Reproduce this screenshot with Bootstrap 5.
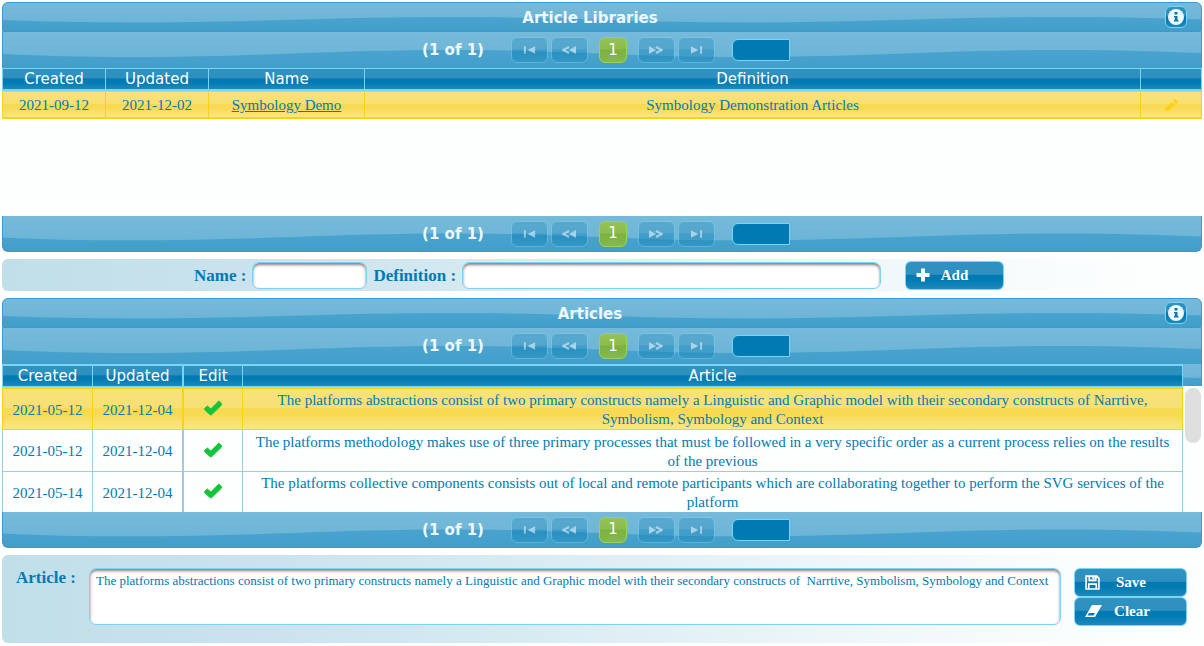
<!DOCTYPE html>
<html lang="en">
<head>
<meta charset="utf-8">
<meta name="viewport" content="width=device-width, initial-scale=1">
<title>Article Libraries</title>
<link href="https://cdn.jsdelivr.net/npm/bootstrap@5.3.0/dist/css/bootstrap.min.css" rel="stylesheet">
<style>
  :root {
    --ink: #017ab3;
    --sky: #79d4f8;
    --glass: linear-gradient(#2f92c0 0%, #2f90bf 46%, #1a80b3 47%, #007ab3 50%, #007ab3 66%, #2089b9 100%);
    --gold: linear-gradient(#f9e37a 0%, #f6df73 48%, #f8da4f 49%, #f8da55 64%, #fae686 100%);
  }
  body { font-family: "Liberation Serif", serif; font-size: 15px; line-height: 19px; color: var(--ink); background: #fdfffe; }
  .page-stack { gap: 7px; padding: 2px; }

  /* Glossy bars with a repeating wave */
  .wave {
    background: url("data:image/svg+xml,%3Csvg xmlns='http://www.w3.org/2000/svg' viewBox='0 0 610 36' preserveAspectRatio='none'%3E%3Cdefs%3E%3ClinearGradient id='a' x2='0' y2='1'%3E%3Cstop stop-color='%2376bada'/%3E%3Cstop offset='1' stop-color='%2368b2d6'/%3E%3C/linearGradient%3E%3ClinearGradient id='b' x2='0' y2='1'%3E%3Cstop stop-color='%2349a3ce'/%3E%3Cstop offset='1' stop-color='%23429fc9'/%3E%3C/linearGradient%3E%3C/defs%3E%3Cpath fill='url(%23a)' d='M0 0h610v36H0z'/%3E%3Cpath fill='url(%23b)' d='M0 22C40 24 80 25 130 25C250 25 330 18 450 18C510 18 560 20 610 22V36H0Z'/%3E%3C/svg%3E") 0 0 / 610px 100% repeat-x;
    font-family: "DejaVu Sans", sans-serif; color: #eef8fc;
    border: 0 solid #3f97cf; border-left-width: 1px; border-right-width: 1px;
  }
  .panel-title { height: 30px; border-top-width: 1px; border-bottom-width: 1px; border-radius: 6px 6px 0 0; padding: 0 14px 0 12px; }
  .panel-title h2 { font-size: 15px; line-height: 28px; font-weight: 700; color: inherit; padding-top: 1px; }
  .info { width: 22px; height: 22px; padding: 0; border: 1px solid var(--sky); border-radius: 6px; background: var(--glass); }

  /* Paginator */
  .pager { height: 36px; padding-left: 8px; gap: 3px; }
  .pager-end { border-bottom-width: 1px; border-radius: 0 0 6px 6px; }
  .pager-text { font-weight: 700; font-size: 15px; margin-right: 24px; padding-top: 1px; }
  .pager button { height: 26px; width: 37px; border: 1px solid var(--sky); border-radius: 6px; padding: 0; display: flex; align-items: center; justify-content: center; background: var(--glass); color: #fff; }
  .pager button:disabled { opacity: .4; }
  .pager button.page-now { width: 28px; margin: 0 8px; background: linear-gradient(#94c355 0, #8abd4b 46%, #7db242 50%, #84b94b 100%); border-color: #9fcf58; font-size: 15px; }
  .pager select { appearance: none; width: 58px; height: 22px; border: 1px solid var(--sky); border-radius: 6px 0 0 6px; background: var(--ink); margin-left: 14px; }

  /* Data tables */
  .grid { width: 100%; table-layout: fixed; border-collapse: separate; border-spacing: 0; text-align: center; }
  .grid th { background: var(--glass); color: #fff; font: 400 15px/19px "DejaVu Sans", sans-serif; border: 0 solid var(--sky); border-width: 1px 1px 2px 0; padding: 1px 0 0; }
  .grid td { border: 0 solid #9fcbe2; border-width: 0 1px 1px 0; padding: 2px 9px 0; background: #fdfffe; }
  .grid th:first-child, .grid td:first-child { border-left-width: 1px; }
  .grid tr.chosen td { background: var(--gold); border-color: #fcd116; border-top-width: 1px; }
  .grid a { color: var(--ink); }
  .grid svg { display: block; margin: 0 auto; }
  .libraries-body { min-height: 148px; }
  .libraries td { height: 28px; }
  .libraries tr.chosen td { border-bottom-width: 2px; }
  .libraries th:nth-child(1) { width: 104px; }
  .libraries th:nth-child(2) { width: 103px; }
  .libraries th:nth-child(3) { width: 156px; }
  .libraries th:nth-child(5) { width: 61px; }
  .articles th { border-width: 2px 1px 1px 0; }
  .articles th:nth-child(1) { width: 91px; }
  .articles th:nth-child(2) { width: 90px; }
  .articles th:nth-child(3) { width: 60px; }
  .articles td { height: 42px; }
  .articles tr.chosen td { border-top-width: 2px; height: 43px; }
  .articles th:nth-child(3), .articles td:nth-child(3) { border-left-width: 1px; }
  .articles td:nth-child(3) { padding-bottom: 4px; }
  .articles tr:last-child td { border-bottom-width: 0; height: 40px; }
  .gutter { width: 19px; }
  .gutter-top { height: 22px; border-left-width: 0; }
  .thumb { width: 16px; height: 55px; border-radius: 8px; background: #dedede; margin: 2px auto 0; }

  /* Entry forms */
  .form-band { border-radius: 6px; background: linear-gradient(90deg, #c0dfe9 0, #cbe3ee 22%, #d4e9f0 38%, #f0f7fa 72%, #fdfffe 96%); }
  .form-band label { font-size: 17px; font-weight: 700; white-space: nowrap; }
  .library-band { padding-right: 6px; }
  .library-form { width: 810px; max-width: 100%; height: 32px; gap: 6px; }
  .name-field { width: 115px; }
  .field { border: 1px solid var(--sky); border-radius: 7px; background: #fff; color: var(--ink); height: 27px; box-shadow: inset 0 2px 3px #8c7a80; min-width: 0; padding: 2px 7px; }
  textarea.field { height: 57px; font-size: 13px; line-height: 17px; padding: 3px 6px; resize: none; display: block; }
  .act { height: 29px; border: 1px solid var(--sky); border-radius: 6px; background: var(--glass); color: #fff; font-weight: 700; font-size: 15px; padding: 0 10px; display: flex; align-items: center; }
  .act svg { flex: none; }
  .act span { flex: 1; text-align: center; padding-right: 14px; }
  .add { width: 99px; margin-left: 18px; }
  .article-form { height: 88px; padding: 13px 15px 0 14px; }
  .article-form label { width: 73px; }
  .actions { width: 113px; margin-left: 13px; }
</style>
</head>
<body>
<svg width="0" height="0" class="position-absolute" aria-hidden="true">
  <symbol id="g-first" viewBox="0 0 14 10"><path fill="#fff" d="M1 1h2v8H1zM13 1v8L5 5z"/></symbol>
  <symbol id="g-prev" viewBox="0 0 14 10"><path fill="#fff" d="M14 1v8L7 5z"/><path fill="none" stroke="#fff" stroke-width="2" d="M7 2 1 5l6 3"/></symbol>
  <symbol id="g-next" viewBox="0 0 14 10"><path fill="#fff" d="M0 1v8l7-4z"/><path fill="none" stroke="#fff" stroke-width="2" d="m7 2 6 3-6 3"/></symbol>
  <symbol id="g-last" viewBox="0 0 14 10"><path fill="#fff" d="M11 1h2v8h-2zM1 1v8l8-4z"/></symbol>
  <symbol id="g-info" viewBox="0 0 16 16"><circle cx="8" cy="8" r="8" fill="#eef7fc"/><path fill="#0b77ad" d="M6.500 3h3v2.500h-3zM6 7h3.500v4h1v1.500H6V11h.8V8.300H6z"/></symbol>
  <symbol id="g-check" viewBox="0 0 18 16"><path fill="#13c33a" stroke="#13c33a" stroke-width="1" stroke-linejoin="round" d="M.6 8.500 3.300 6l3.500 3L14.800 1l2.700 2.600v1.500L7.500 14.800H6.200L.6 9.500z"/></symbol>
</svg>

<main class="page-stack d-flex flex-column">
  <section>
    <header class="wave panel-title d-flex align-items-center">
      <h2 class="flex-grow-1 text-center m-0">Article Libraries</h2>
      <button class="info d-flex align-items-center justify-content-center" type="button" aria-label="About article libraries"><svg width="16" height="16"><use href="#g-info"/></svg></button>
    </header>
    <nav class="wave pager d-flex align-items-center justify-content-center" aria-label="Library pages, top">
      <span class="pager-text">(1 of 1)</span>
      <button type="button" disabled aria-label="First page"><svg width="13" height="10"><use href="#g-first"/></svg></button>
      <button type="button" disabled aria-label="Previous page"><svg width="14" height="10"><use href="#g-prev"/></svg></button>
      <button type="button" class="page-now">1</button>
      <button type="button" disabled aria-label="Next page"><svg width="14" height="10"><use href="#g-next"/></svg></button>
      <button type="button" disabled aria-label="Last page"><svg width="13" height="10"><use href="#g-last"/></svg></button>
      <select aria-label="Rows per page"></select>
    </nav>
    <div class="libraries-body">
      <table class="grid libraries">
        <thead><tr><th>Created</th><th>Updated</th><th>Name</th><th>Definition</th><th></th></tr></thead>
        <tbody><tr class="chosen"><td>2021-09-12</td><td>2021-12-02</td><td><a href="#">Symbology Demo</a></td><td>Symbology Demonstration Articles</td>
          <td><svg width="13" height="13" viewBox="0 0 13 13"><path fill="#fcd116" d="M0 12 .5 8.500 7 3l3 3-6 5.500zM8 2l2-2 3 3-2 2z"/></svg></td></tr></tbody>
      </table>
    </div>
    <nav class="wave pager pager-end d-flex align-items-center justify-content-center" aria-label="Library pages, bottom">
      <span class="pager-text">(1 of 1)</span>
      <button type="button" disabled aria-label="First page"><svg width="13" height="10"><use href="#g-first"/></svg></button>
      <button type="button" disabled aria-label="Previous page"><svg width="14" height="10"><use href="#g-prev"/></svg></button>
      <button type="button" class="page-now">1</button>
      <button type="button" disabled aria-label="Next page"><svg width="14" height="10"><use href="#g-next"/></svg></button>
      <button type="button" disabled aria-label="Last page"><svg width="13" height="10"><use href="#g-last"/></svg></button>
      <select aria-label="Rows per page"></select>
    </nav>
  </section>

  <form class="form-band library-band">
    <div class="library-form mx-auto d-flex align-items-center">
      <label for="lib-name">Name :</label>
      <input id="lib-name" class="field name-field" type="text">
      <label for="lib-def">Definition :</label>
      <input id="lib-def" class="field flex-grow-1" type="text">
      <button type="button" class="act add"><svg width="14" height="14" viewBox="0 0 14 14"><path fill="#fff" d="M5 .5h4V5h4.500v4H9v4.500H5V9H.5V5H5z"/></svg><span>Add</span></button>
    </div>
  </form>

  <section>
    <header class="wave panel-title d-flex align-items-center">
      <h2 class="flex-grow-1 text-center m-0">Articles</h2>
      <button class="info d-flex align-items-center justify-content-center" type="button" aria-label="About articles"><svg width="16" height="16"><use href="#g-info"/></svg></button>
    </header>
    <nav class="wave pager d-flex align-items-center justify-content-center" aria-label="Article pages, top">
      <span class="pager-text">(1 of 1)</span>
      <button type="button" disabled aria-label="First page"><svg width="13" height="10"><use href="#g-first"/></svg></button>
      <button type="button" disabled aria-label="Previous page"><svg width="14" height="10"><use href="#g-prev"/></svg></button>
      <button type="button" class="page-now">1</button>
      <button type="button" disabled aria-label="Next page"><svg width="14" height="10"><use href="#g-next"/></svg></button>
      <button type="button" disabled aria-label="Last page"><svg width="13" height="10"><use href="#g-last"/></svg></button>
      <select aria-label="Rows per page"></select>
    </nav>
    <div class="d-flex">
      <div class="flex-grow-1">
        <table class="grid articles">
          <thead><tr><th>Created</th><th>Updated</th><th>Edit</th><th>Article</th></tr></thead>
          <tbody>
            <tr class="chosen"><td>2021-05-12</td><td>2021-12-04</td><td><svg width="18" height="16"><use href="#g-check"/></svg></td><td>The platforms abstractions consist of two primary constructs namely a Linguistic and Graphic model with their secondary constructs of Narrtive, Symbolism, Symbology and Context</td></tr>
            <tr><td>2021-05-12</td><td>2021-12-04</td><td><svg width="18" height="16"><use href="#g-check"/></svg></td><td>The platforms methodology makes use of three primary processes that must be followed in a very specific order as a current process relies on the results of the previous</td></tr>
            <tr><td>2021-05-14</td><td>2021-12-04</td><td><svg width="18" height="16"><use href="#g-check"/></svg></td><td>The platforms collective components consists out of local and remote participants which are collaborating together to perform the SVG services of the platform</td></tr>
          </tbody>
        </table>
      </div>
      <div class="gutter flex-shrink-0"><div class="wave gutter-top"></div><div class="thumb"></div></div>
    </div>
    <nav class="wave pager pager-end d-flex align-items-center justify-content-center" aria-label="Article pages, bottom">
      <span class="pager-text">(1 of 1)</span>
      <button type="button" disabled aria-label="First page"><svg width="13" height="10"><use href="#g-first"/></svg></button>
      <button type="button" disabled aria-label="Previous page"><svg width="14" height="10"><use href="#g-prev"/></svg></button>
      <button type="button" class="page-now">1</button>
      <button type="button" disabled aria-label="Next page"><svg width="14" height="10"><use href="#g-next"/></svg></button>
      <button type="button" disabled aria-label="Last page"><svg width="13" height="10"><use href="#g-last"/></svg></button>
      <select aria-label="Rows per page"></select>
    </nav>
  </section>

  <form class="form-band article-form d-flex">
    <label for="article">Article :</label>
    <textarea id="article" class="field flex-grow-1">The platforms abstractions consist of two primary constructs namely a Linguistic and Graphic model with their secondary constructs of  Narrtive, Symbolism, Symbology and Context</textarea>
    <div class="actions d-flex flex-column">
      <button type="button" class="act"><svg width="15" height="15" viewBox="0 0 14 14"><path fill="none" stroke="#fff" stroke-width="1.500" d="M1 1h10l2 2v10H1zM4 1v4h6V1M3.500 13V8.500h7V13"/><path fill="#fff" d="M7 1h2v3H7z"/></svg><span>Save</span></button>
      <button type="button" class="act"><svg width="17" height="13" viewBox="0 0 17 13"><path fill="#fff" d="M7 0h10l-7 12H0zM2.500 10.500h6l1.500-2.500h-6z" fill-rule="evenodd"/></svg><span>Clear</span></button>
    </div>
  </form>
</main>
<script src="https://cdn.jsdelivr.net/npm/bootstrap@5.3.0/dist/js/bootstrap.bundle.min.js"></script>
</body>
</html>
